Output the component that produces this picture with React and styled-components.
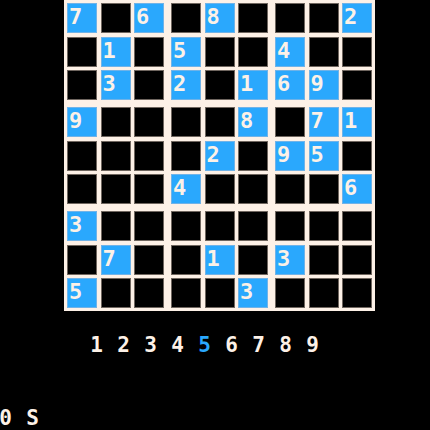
import React from "react";
import styled, { createGlobalStyle } from "styled-components";

const puzzle = [
    "7.6.8...2",
    ".1.5..4..",
    ".3.2.169.",
    "9....8.71",
    "....2.95.",
    "...4....6",
    "3........",
    ".7..1.3..",
    "5....3...",
];

const GlobalStyle = createGlobalStyle`
body {
    margin: 0;
    background: #000000;
    font-family: "DejaVu Sans Mono", "Liberation Mono", monospace;
}
`

function App() {
    const boxes = [0, 1, 2].flatMap((br) => [0, 1, 2].map((bc) => ({ br, bc })));

    return (
        <>
            <GlobalStyle />
            <Tela>
                <Tabuleiro>
                    {boxes.map(({ br, bc }) => (
                        <Bloco key={`${br}-${bc}`}>
                            {[0, 1, 2].flatMap((r) =>
                                [0, 1, 2].map((c) => {
                                    const valor = puzzle[br * 3 + r][bc * 3 + c];
                                    const fixo = valor !== ".";
                                    return (
                                        <Casa key={`${r}-${c}`} fixo={fixo}>
                                            {fixo ? valor : ""}
                                        </Casa>
                                    );
                                })
                            )}
                        </Bloco>
                    ))}
                </Tabuleiro>
                <Numeros>
                    {[1, 2, 3, 4, 5, 6, 7, 8, 9].map((n) => (
                        <Numero key={n} ativo={n === 5}>{n}</Numero>
                    ))}
                </Numeros>
                <Rodape>
                    <Numero>0</Numero>
                    <Numero>S</Numero>
                </Rodape>
            </Tela>
        </>
    );
}

export default App;

const Tela = styled.div`
width: 430px;
height: 430px;
display: flex;
flex-direction: column;
overflow: hidden;
`

const Tabuleiro = styled.div`
margin-left: 64px;
width: 305px;
padding: 3px;
background: #fdf1e7;
display: grid;
grid-template-columns: repeat(3, 97px);
grid-template-rows: repeat(3, 97px);
gap: 7px;
`

const Bloco = styled.div`
display: grid;
grid-template-columns: repeat(3, 30px);
grid-template-rows: repeat(3, 30px);
gap: 3.5px;
`

const Casa = styled.div`
box-sizing: border-box;
width: 30px;
height: 30px;
background: ${(props) => (props.fixo ? "#2aa8fd" : "#000000")};
box-shadow: inset 0 0 0 1px ${(props) => (props.fixo ? "rgba(120, 180, 230, 0.9)" : "rgba(130, 120, 112, 0.85)")};
color: #fdf1e7;
font-size: 22px;
font-weight: 700;
line-height: 22px;
padding: 3px 0 0 2px;
`

const Numeros = styled.div`
margin-top: 22px;
margin-left: 83px;
display: flex;
`

const Numero = styled.span`
width: 27px;
height: 24px;
text-align: center;
font-size: 21px;
font-weight: 700;
line-height: 24px;
color: ${(props) => (props.ativo ? "#2aa8fd" : "#fdf1e7")};
`

const Rodape = styled.div`
margin-top: auto;
margin-left: -8px;
display: flex;
`
